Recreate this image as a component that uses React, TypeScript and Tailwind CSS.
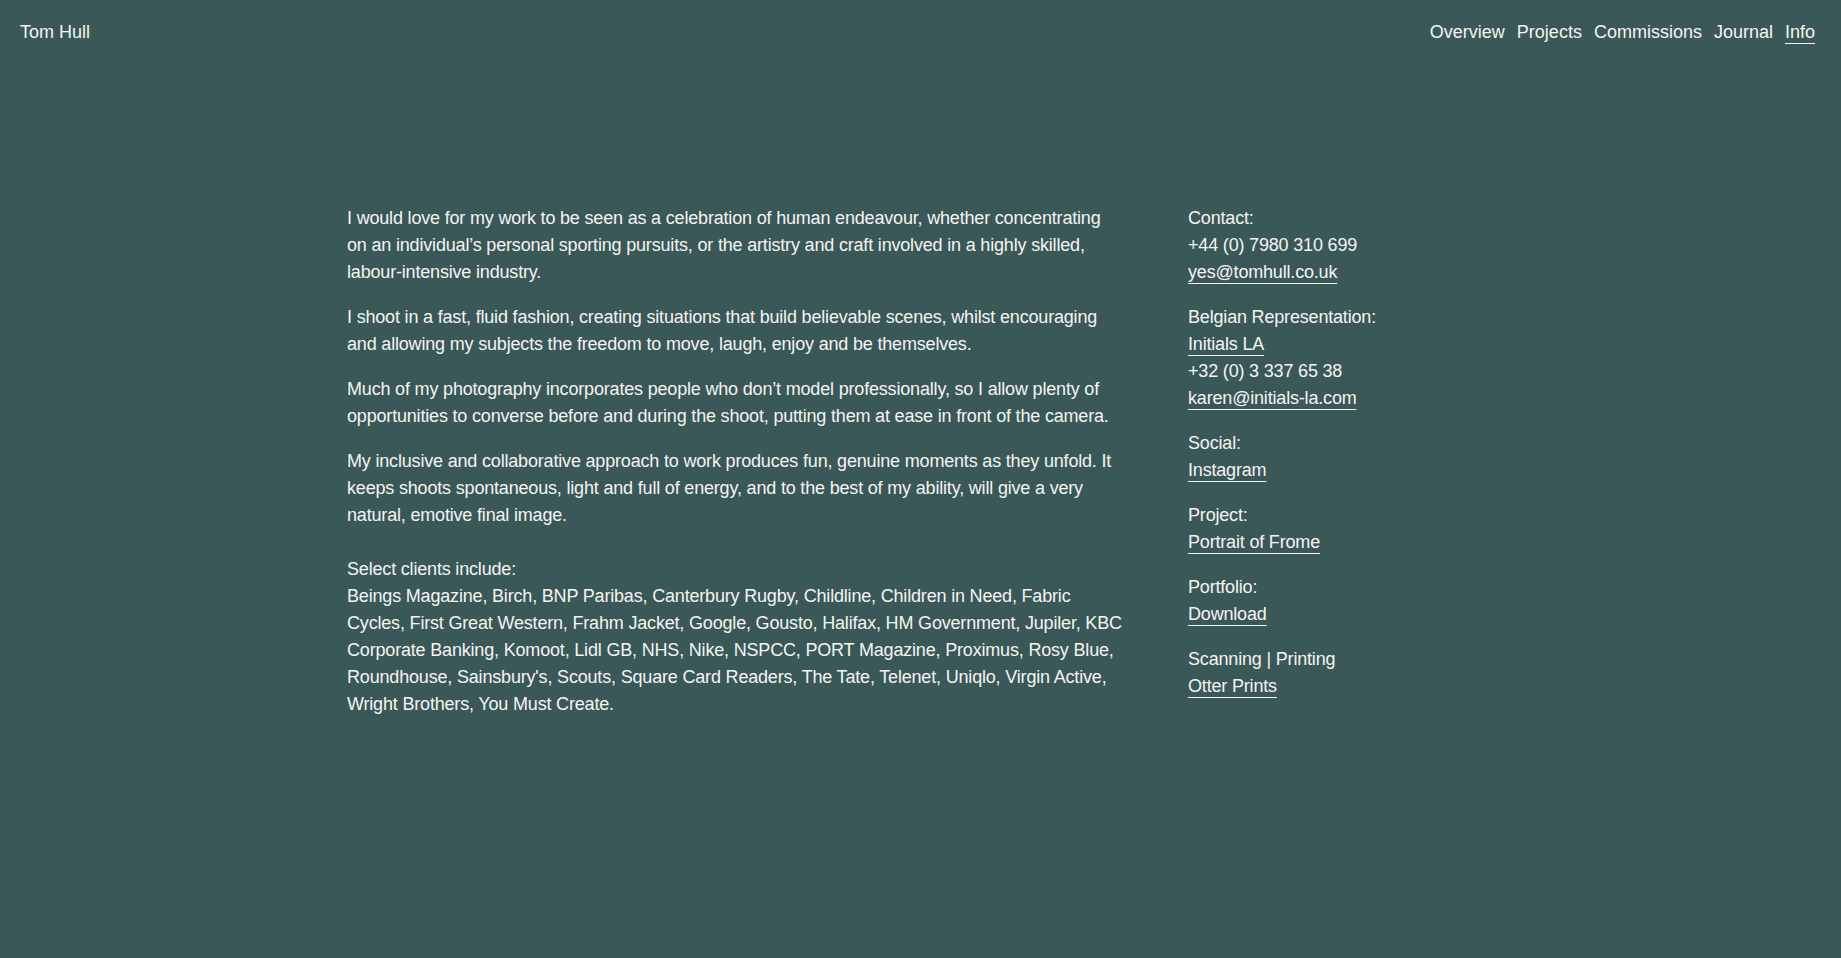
import React from 'react'

const links = ['Overview', 'Projects', 'Commissions', 'Journal', 'Info']

const paragraphs = [
  'I would love for my work to be seen as a celebration of human endeavour, whether concentrating on an individual’s personal sporting pursuits, or the artistry and craft involved in a highly skilled, labour-intensive industry.',
  'I shoot in a fast, fluid fashion, creating situations that build believable scenes, whilst encouraging and allowing my subjects the freedom to move, laugh, enjoy and be themselves.',
  'Much of my photography incorporates people who don’t model professionally, so I allow plenty of opportunities to converse before and during the shoot, putting them at ease in front of the camera.',
  'My inclusive and collaborative approach to work produces fun, genuine moments as they unfold. It keeps shoots spontaneous, light and full of energy, and to the best of my ability, will give a very natural, emotive final image.',
]

const clients =
  "Beings Magazine, Birch, BNP Paribas, Canterbury Rugby, Childline, Children in Need, Fabric Cycles, First Great Western, Frahm Jacket, Google, Gousto, Halifax, HM Government, Jupiler, KBC Corporate Banking, Komoot, Lidl GB, NHS, Nike, NSPCC, PORT Magazine, Proximus, Rosy Blue, Roundhouse, Sainsbury's, Scouts, Square Card Readers, The Tate, Telenet, Uniqlo, Virgin Active, Wright Brothers, You Must Create."

type Line = { text: string; link?: boolean }

const contact: Line[][] = [
  [{ text: 'Contact:' }, { text: '+44 (0) 7980 310 699' }, { text: 'yes@tomhull.co.uk', link: true }],
  [
    { text: 'Belgian Representation:' },
    { text: 'Initials LA', link: true },
    { text: '+32 (0) 3 337 65 38' },
    { text: 'karen@initials-la.com', link: true },
  ],
  [{ text: 'Social:' }, { text: 'Instagram', link: true }],
  [{ text: 'Project:' }, { text: 'Portrait of Frome', link: true }],
  [{ text: 'Portfolio:' }, { text: 'Download', link: true }],
  [{ text: 'Scanning | Printing' }, { text: 'Otter Prints', link: true }],
]

const underline = 'underline decoration-1 underline-offset-[5px]'

export default function App() {
  return (
    <div
      className="min-h-[958px] w-full bg-[#3a5857] text-[#f4f4f2] text-[18px] leading-[27px]"
      style={{ fontFamily: '"Liberation Sans", Arial, sans-serif' }}
    >
      <header className="flex items-start justify-between pl-[20px] pr-[26px] pt-[19px]">
        <a>Tom Hull</a>
        <nav className="flex gap-x-[12px]">
          {links.map((l) => (
            <a key={l} className={l === 'Info' ? underline : ''}>
              {l}
            </a>
          ))}
        </nav>
      </header>

      {/* about text + contact column */}
      <main className="mx-auto mt-[159px] grid max-w-[1147px] grid-cols-[776px_1fr] gap-x-[65px] tracking-[-0.01em]">
        <div>
          {paragraphs.map((p) => (
            <p key={p} className="mb-[18px]">
              {p}
            </p>
          ))}
          <p className="mt-[27px]">
            Select clients include:
            <br />
            {clients}
          </p>
        </div>

        <div className="flex flex-col gap-y-[18px]">
          {contact.map((group, i) => (
            <div key={i} className="flex flex-col items-start">
              {group.map((line) => (
                <span key={line.text} className={line.link ? underline : ''}>
                  {line.text}
                </span>
              ))}
            </div>
          ))}
        </div>
      </main>
    </div>
  )
}
